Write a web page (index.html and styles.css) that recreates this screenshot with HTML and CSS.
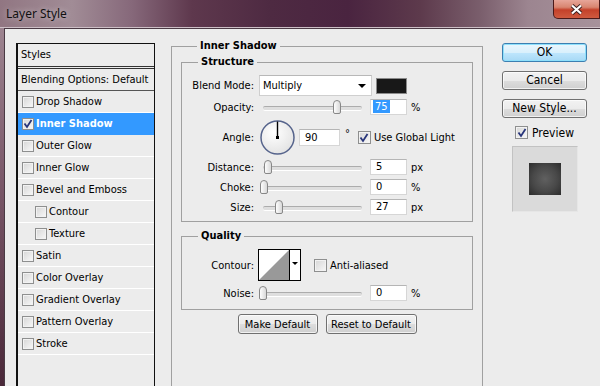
FILE: index.html
```html
<!DOCTYPE html>
<html lang="en">
<head>
    <meta charset="UTF-8">
    <title>Layer Style</title>
    <link rel="stylesheet" href="styles.css">
</head>
<body>
    <div class="titlebar">
        <span class="title">Layer Style</span>
        <div class="close">
            <svg width="13" height="11" viewBox="0 0 13 11">
                <path d="M2 1.5 L11 9.5 M11 1.5 L2 9.5" stroke="#3a2020" stroke-width="4" fill="none"/>
                <path d="M2 1.5 L11 9.5 M11 1.5 L2 9.5" stroke="#ffffff" stroke-width="2.2" fill="none"/>
            </svg>
        </div>
    </div>

    <div class="client">
        <!-- effects list -->
        <div class="styles-list">
            <div class="list-head">Styles</div>
            <div class="list-row blending">Blending Options: Default</div>
            <div class="list-row"><span class="check"></span>Drop Shadow</div>
            <div class="list-row selected">
                <span class="check"><svg width="10" height="10" viewBox="0 0 10 10"><path d="M1.5 4.5 L4 8 L8.5 1" fill="none" stroke="#27347a" stroke-width="1.8"/></svg></span>Inner Shadow
            </div>
            <div class="list-row"><span class="check"></span>Outer Glow</div>
            <div class="list-row"><span class="check"></span>Inner Glow</div>
            <div class="list-row"><span class="check"></span>Bevel and Emboss</div>
            <div class="list-row sub"><span class="check"></span>Contour</div>
            <div class="list-row sub"><span class="check"></span>Texture</div>
            <div class="list-row"><span class="check"></span>Satin</div>
            <div class="list-row"><span class="check"></span>Color Overlay</div>
            <div class="list-row"><span class="check"></span>Gradient Overlay</div>
            <div class="list-row"><span class="check"></span>Pattern Overlay</div>
            <div class="list-row"><span class="check"></span>Stroke</div>
        </div>

        <!-- settings -->
        <fieldset class="group effect">
            <legend>Inner Shadow</legend>

            <fieldset class="group inner structure">
                <legend>Structure</legend>

                <div class="row blend">
                    <span class="lbl">Blend Mode:</span>
                    <div class="select">Multiply<span class="arrow"></span></div>
                    <div class="swatch"></div>
                </div>

                <div class="row opacity">
                    <span class="lbl">Opacity:</span>
                    <div class="slider"><span class="thumb" style="left: 75%"></span></div>
                    <div class="field"><span class="sel">75</span></div>
                    <span class="unit">%</span>
                </div>

                <div class="row angle">
                    <span class="lbl">Angle:</span>
                    <svg class="dial" width="35" height="35" viewBox="0 0 35 35">
                        <defs>
                            <radialGradient id="dialFill" cx="40%" cy="35%" r="70%">
                                <stop offset="0" stop-color="#ffffff"/>
                                <stop offset="1" stop-color="#e2e2e2"/>
                            </radialGradient>
                        </defs>
                        <circle cx="17.5" cy="17.5" r="16.5" fill="url(#dialFill)" stroke="#56648c" stroke-width="1.5"/>
                        <line x1="17.5" y1="17.5" x2="17.5" y2="1.5" stroke="#000" stroke-width="1.4"/>
                        <rect x="16" y="16" width="3" height="3" fill="#000"/>
                    </svg>
                    <div class="field wide">90</div>
                    <span class="deg">°</span>
                    <span class="check global"><svg width="10" height="10" viewBox="0 0 10 10"><path d="M1.5 4.5 L4 8 L8.5 1" fill="none" stroke="#27347a" stroke-width="1.8"/></svg></span>
                    <span class="check-text">Use Global Light</span>
                </div>

                <div class="row">
                    <span class="lbl">Distance:</span>
                    <div class="slider"><span class="thumb" style="left: 5%"></span></div>
                    <div class="field">5</div>
                    <span class="unit">px</span>
                </div>

                <div class="row">
                    <span class="lbl">Choke:</span>
                    <div class="slider"><span class="thumb" style="left: 1%"></span></div>
                    <div class="field">0</div>
                    <span class="unit">%</span>
                </div>

                <div class="row">
                    <span class="lbl">Size:</span>
                    <div class="slider"><span class="thumb" style="left: 16%"></span></div>
                    <div class="field">27</div>
                    <span class="unit">px</span>
                </div>
            </fieldset>

            <fieldset class="group inner quality">
                <legend>Quality</legend>

                <div class="row contour">
                    <span class="lbl">Contour:</span>
                    <svg class="contour-box" width="43" height="32" viewBox="0 0 43 32">
                        <rect x="0.5" y="0.5" width="42" height="31" fill="#fff" stroke="#000"/>
                        <polygon points="1,31 31,1 31,31" fill="#999"/>
                        <line x1="31.5" y1="0" x2="31.5" y2="32" stroke="#000"/>
                        <polygon points="34,13 40,13 37,16" fill="#000"/>
                    </svg>
                    <span class="check aa"></span>
                    <span class="check-text">Anti-aliased</span>
                </div>

                <div class="row noise">
                    <span class="lbl">Noise:</span>
                    <div class="slider"><span class="thumb" style="left: 0%"></span></div>
                    <div class="field">0</div>
                    <span class="unit">%</span>
                </div>
            </fieldset>

            <div class="defaults">
                <button class="btn make">Make Default</button>
                <button class="btn reset">Reset to Default</button>
            </div>
        </fieldset>

        <!-- dialog buttons -->
        <div class="side">
            <button class="btn big ok">OK</button>
            <button class="btn big">Cancel</button>
            <button class="btn big">New Style...</button>
            <div class="preview-row">
                <span class="check big-check"><svg width="10" height="10" viewBox="0 0 10 10"><path d="M1.5 4.5 L4 8 L8.5 1" fill="none" stroke="#27347a" stroke-width="1.8"/></svg></span>
                <span>Preview</span>
            </div>
            <div class="preview-box">
                <div class="preview-swatch"></div>
            </div>
        </div>
    </div>
</body>
</html>
```

FILE: styles.css
```css
* {
    box-sizing: border-box;
}

body {
    margin: 0;
    width: 600px;
    height: 386px;
    overflow: hidden;
    font-family: "DejaVu Sans Condensed", "DejaVu Sans", sans-serif;
    font-stretch: condensed;
    font-size: 11px;
    color: #000;
    background: linear-gradient(to bottom, #a38c97 0%, #7c5a6b 45%, #4a2839 100%);
}

/* window title */
.titlebar {
    height: 28px;
    display: flex;
    align-items: flex-start;
    border-bottom: 1px solid #cdbfc6;
    background: linear-gradient(to right, #917682 0%, #a18c96 12%, #86687a 22%, #5e384d 32%, #4e2a42 45%, #4a2440 58%, #5d3a4c 70%, #7a5e6c 80%, #9c8590 88%, #a7929b 100%);
}

.title {
    align-self: center;
    padding-left: 6px;
    font-family: "Noto Sans", sans-serif;
    font-stretch: normal;
    font-size: 12px;
    color: #111;
    text-shadow: 0 0 6px rgba(255, 255, 255, 0.6);
}

.close {
    margin-left: auto;
    width: 47px;
    height: 19px;
    display: flex;
    align-items: center;
    justify-content: center;
    border: 1px solid #4a1a1a;
    border-top: none;
    border-radius: 0 0 0 5px;
    background: linear-gradient(to bottom, #e7a699 0%, #d88570 40%, #c4412a 55%, #cf5a3f 100%);
}

/* dialog body */
.client {
    display: flex;
    align-items: flex-start;
    margin-left: 4px;
    height: 358px;
    overflow: hidden;
    padding: 10px 0 0 11px;
    background: #ececec;
    border-top: 1px solid #4a3a44;
    border-left: 1px solid #4a3a44;
}

.styles-list {
    flex: none;
    width: 139px;
    height: 360px;
    margin-top: 4px;
    border: 1px solid #111;
    border-left-width: 2px;
    background: #ececec;
}

.list-head {
    height: 25px;
    line-height: 22px;
    padding-left: 3px;
    border-bottom: 3px double #333;
}

.list-row {
    height: 22px;
    display: flex;
    align-items: center;
    padding-left: 4px;
    border-bottom: 1px solid #fff;
}

.list-row.blending {
    padding-left: 3px;
    border-bottom-color: #555;
}

.list-row.sub {
    padding-left: 17px;
}

.list-row.selected {
    background: #3399ff;
    color: #fff;
    font-weight: bold;
    border-bottom-color: #3399ff;
}

.check {
    flex: none;
    width: 12px;
    height: 12px;
    margin-right: 2px;
    display: flex;
    align-items: center;
    justify-content: center;
    border: 1px solid #8e8f8f;
    background: linear-gradient(135deg, #d6d6d6, #f8f8f8);
    box-shadow: inset 0 0 0 1px #f2f2f2;
}

.check svg {
    display: block;
}

/* group boxes */
.group {
    margin: 0;
    padding: 0;
    min-width: 0;
    border: 1px solid #a0a0a0;
}

.group legend {
    margin-left: 16px;
    padding: 0 3px;
    line-height: 14px;
    font-weight: bold;
}

.effect {
    flex: none;
    width: 312px;
    height: 400px;
    margin-left: 16px;
    padding: 2px 9px 0 9px;
}

.structure {
    padding: 6px 0 6px 0;
}

.quality {
    margin-top: 7px;
    padding: 6px 0 8px 0;
}

.row {
    display: flex;
    align-items: center;
    height: 16px;
    margin-top: 4px;
}

.row.blend {
    height: 21px;
    margin-top: 0;
}

.row.opacity {
    margin-top: 3px;
}

.row.angle {
    height: 35px;
    margin-top: 5px;
}

.row.contour {
    height: 32px;
    margin-top: 0;
}

.lbl {
    flex: none;
    width: 72px;
    text-align: right;
}

.select {
    width: 113px;
    height: 21px;
    margin-left: 5px;
    display: flex;
    align-items: center;
    justify-content: space-between;
    padding: 0 5px 0 3px;
    background: #fff;
    border: 1px solid #cfcfcf;
    border-top-color: #b8b8b8;
}

.arrow {
    width: 0;
    height: 0;
    border-left: 4px solid transparent;
    border-right: 4px solid transparent;
    border-top: 4px solid #000;
}

.swatch {
    width: 31px;
    height: 16px;
    margin-left: 4px;
    background: #181818;
    border: 1px solid #8a8a8a;
}

.slider {
    position: relative;
    width: 99px;
    height: 16px;
    margin-left: 9px;
}

.slider::before {
    content: "";
    position: absolute;
    left: 0;
    right: 0;
    top: 7px;
    height: 3px;
    border-radius: 2px;
    background: #dedede;
    border-top: 1px solid #acacac;
    border-bottom: 1px solid #fff;
}

.thumb {
    position: absolute;
    top: 1px;
    width: 8px;
    height: 14px;
    margin-left: -4px;
    border: 1px solid #878787;
    border-radius: 4px 4px 2px 2px;
    background: linear-gradient(to right, #fdfdfd, #d9d9d9);
}

.field {
    width: 37px;
    height: 16px;
    margin-left: 8px;
    padding-left: 5px;
    line-height: 14px;
    background: #fff;
    border: 1px solid #d6d6d6;
    border-top-color: #b5b5b5;
}

.field.wide {
    width: 41px;
    height: 17px;
    margin-left: 4px;
    line-height: 15px;
}

.sel {
    margin-left: -3px;
    padding: 0 2px;
    background: #3399ff;
    color: #fff;
}

.unit {
    margin-left: 4px;
}

.dial {
    flex: none;
    margin-left: 6px;
}

.deg {
    align-self: flex-start;
    margin-top: 8px;
    margin-left: 5px;
    line-height: 12px;
}

.check.global {
    width: 13px;
    height: 13px;
    margin-left: 8px;
}

.check-text {
    margin-left: 1px;
}

.contour-box {
    flex: none;
    margin-left: 4px;
}

.check.aa {
    width: 13px;
    height: 13px;
    margin-left: 13px;
}

.defaults {
    display: flex;
    justify-content: center;
    gap: 8px;
    margin-top: 4px;
}

/* buttons */
.btn {
    font: inherit;
    color: #000;
    height: 20px;
    padding: 0;
    border: 1px solid #707070;
    border-radius: 3px;
    background: linear-gradient(to bottom, #f2f2f2 0%, #ebebeb 50%, #dddddd 51%, #cfcfcf 100%);
    box-shadow: inset 0 0 0 1px rgba(255, 255, 255, 0.7);
}

.btn.make {
    width: 80px;
}

.btn.reset {
    width: 91px;
}

.side {
    flex: none;
    width: 85px;
    margin-left: 19px;
    margin-top: 4px;
    display: flex;
    flex-direction: column;
}

.btn.big {
    width: 85px;
    height: 19px;
    margin-bottom: 9px;
    font-size: 12px;
    line-height: 15px;
}

.btn.ok {
    border-color: #3c7fb1;
    background: linear-gradient(to bottom, #eaf6fd 0%, #d9f0fc 50%, #bee6fd 51%, #a7d9f5 100%);
    box-shadow: inset 0 0 0 1px #8ee0fb;
}

.preview-row {
    display: flex;
    justify-content: center;
    align-items: center;
    height: 13px;
    margin-top: -1px;
    font-size: 12px;
}

.check.big-check {
    width: 13px;
    height: 13px;
    margin-right: 4px;
}

.preview-box {
    width: 66px;
    height: 66px;
    margin: 7px auto 0;
    display: flex;
    align-items: center;
    justify-content: center;
    background: #dadada;
    border: 1px solid #c2c2c2;
    border-right-color: #e6e6e6;
    border-bottom-color: #e6e6e6;
}

.preview-swatch {
    width: 32px;
    height: 32px;
    background: radial-gradient(circle, #606060 0%, #484848 55%, #2c2c2c 100%);
}
```
